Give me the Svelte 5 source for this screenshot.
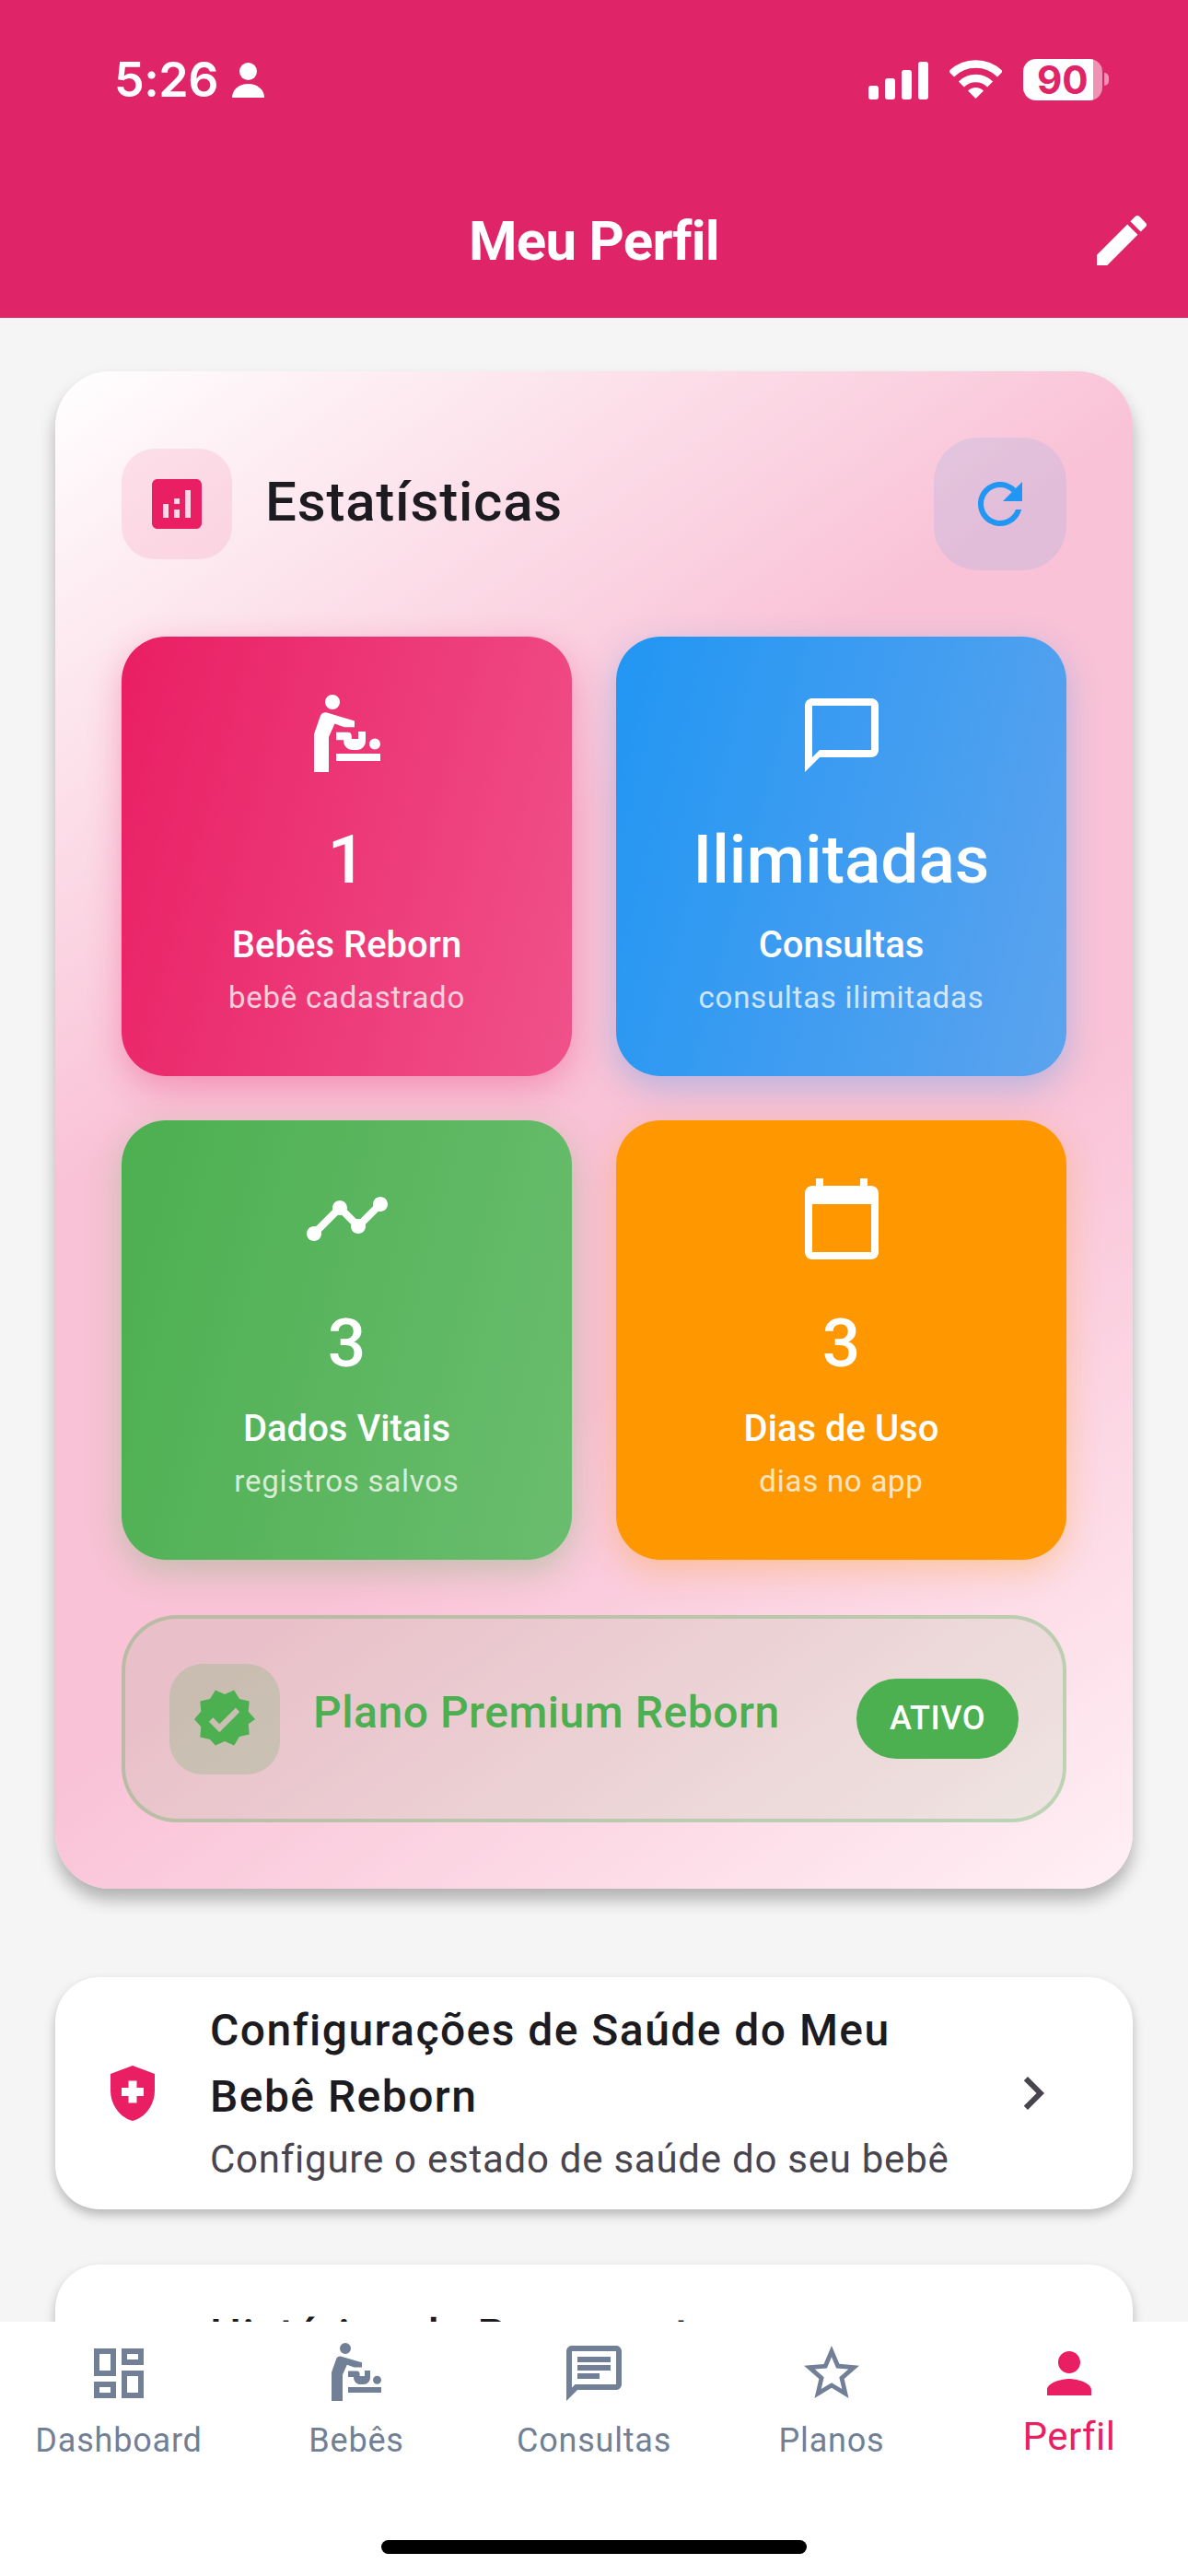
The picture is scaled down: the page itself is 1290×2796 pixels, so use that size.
<script>
  const icons = {
    baby: "M8 1a2 2 0 1 1 0 4a2 2 0 0 1 0-4zM3 22V11.7L4.7 6.8C5 6 5.8 5.7 6.5 5.9L14 8.1V9.8H11.2L8.6 8.9L7 12.5V22zM9 17h12v2H9zM19.5 12.9a1.5 1.5 0 1 1 0 3a1.5 1.5 0 0 1 0-3zM9 11.2H12.2C12.9 11.2 13.2 11.7 13.2 12.3V13H15V11H17V13.5C17 14.9 16 16 14.6 16H13.6C12 16 11 14.9 11 13.3H9z",
    bubble: "M20 2H4c-1.1 0-2 .9-2 2v18l4-4h14c1.1 0 2-.9 2-2V4c0-1.1-.9-2-2-2zm0 14H6l-2 2V4h16v12z",
    timeline: "M23 8c0 1.1-.9 2-2 2-.18 0-.35-.02-.51-.07l-3.56 3.55c.05.16.07.34.07.52 0 1.1-.9 2-2 2s-2-.9-2-2c0-.18.02-.36.07-.52l-2.55-2.55c-.16.05-.34.07-.52.07s-.36-.02-.52-.07l-4.55 4.56c.05.16.07.33.07.51 0 1.1-.9 2-2 2s-2-.9-2-2 .9-2 2-2c.18 0 .35.02.51.07l4.56-4.55C8.02 9.36 8 9.18 8 9c0-1.1.9-2 2-2s2 .9 2 2c0 .18-.02.36-.07.52l2.55 2.55c.16-.05.34-.07.52-.07s.36.02.52.07l3.55-3.56C19.02 8.35 19 8.18 19 8c0-1.1.9-2 2-2s2 .9 2 2z",
    calendar: "M20 3h-1V1h-2v2H7V1H5v2H4c-1.1 0-2 .9-2 2v16c0 1.1.9 2 2 2h16c1.1 0 2-.9 2-2V5c0-1.1-.9-2-2-2zm0 18H4V8h16v13z",
    dashboard: "M19 5v2h-4V5h4M9 5v6H5V5h4m10 8v6h-4v-6h4M9 17v2H5v-2h4M21 3h-8v6h8V3zM11 3H3v10h8V3zm10 8h-8v10h8V11zm-10 4H3v6h8v-6z",
    chat: "M20 2H4c-1.1 0-1.99.9-1.99 2L2 22l4-4h14c1.1 0 2-.9 2-2V4c0-1.1-.9-2-2-2zm0 14H5.17L4 17.17V4h16v12zM6 12h8v2H6zm0-3h12v2H6zm0-3h12v2H6z",
    star: "M22 9.24l-7.19-.62L12 2 9.19 8.63 2 9.24l5.46 4.73L5.82 21 12 17.27 18.18 21l-1.63-7.03L22 9.24zM12 15.4l-3.76 2.27 1-4.28-3.32-2.88 4.38-.38L12 6.1l1.71 4.04 4.38.38-3.32 2.88 1 4.28L12 15.4z",
    person: "M12 12c2.21 0 4-1.79 4-4s-1.79-4-4-4-4 1.79-4 4 1.79 4 4 4zm0 2c-2.67 0-8 1.34-8 4v2h16v-2c0-2.66-5.33-4-8-4z",
    edit: "M3 17.25V21h3.75L17.81 9.94l-3.75-3.75L3 17.25zM20.71 7.04c.39-.39.39-1.02 0-1.41l-2.34-2.34c-.39-.39-1.02-.39-1.41 0l-1.83 1.83 3.75 3.75 1.83-1.83z",
    analytics: "M19 3H5c-1.1 0-2 .9-2 2v14c0 1.1.9 2 2 2h14c1.1 0 2-.9 2-2V5c0-1.1-.9-2-2-2zM9 17H7v-5h2v5zm4 0h-2v-3h2v3zm0-5h-2v-2h2v2zm4 5h-2V7h2v10z",
    refresh: "M17.65 6.35C16.2 4.9 14.21 4 12 4c-4.42 0-7.99 3.58-7.99 8s3.57 8 7.99 8c3.73 0 6.84-2.55 7.73-6h-2.08c-.82 2.33-3.04 4-5.65 4-3.31 0-6-2.69-6-6s2.69-6 6-6c1.66 0 3.14.69 4.22 1.78L13 11h7V4l-2.35 2.35z",
    verified: "M23 12l-2.44-2.79.34-3.69-3.61-.82-1.89-3.2L12 2.96 8.6 1.5 6.71 4.69 3.1 5.5l.34 3.7L1 12l2.44 2.79-.34 3.7 3.61.82L8.6 21.5l3.4-1.47 3.4 1.46 1.89-3.19 3.61-.82-.34-3.69L23 12zm-12.91 4.72l-3.8-3.81 1.48-1.48 2.32 2.33 5.85-5.87 1.48 1.48-7.33 7.35z",
    health: "M10.5 13H8v-3h2.5V7.5h3V10H16v3h-2.5v2.5h-3V13zM12 2L4 5v6.09c0 5.05 3.41 9.76 8 10.91 4.59-1.15 8-5.86 8-10.91V5l-8-3z",
    chevron: "M10 6L8.59 7.41 13.17 12l-4.58 4.59L10 18l6-6z"
  };

  const stats = [
    { color: "pink", icon: "baby", value: "1", label: "Bebês Reborn", sub: "bebê cadastrado" },
    { color: "blue", icon: "bubble", value: "Ilimitadas", label: "Consultas", sub: "consultas ilimitadas" },
    { color: "green", icon: "timeline", value: "3", label: "Dados Vitais", sub: "registros salvos" },
    { color: "orange", icon: "calendar", value: "3", label: "Dias de Uso", sub: "dias no app" }
  ];

  const tabs = [
    { icon: "dashboard", label: "Dashboard" },
    { icon: "baby", label: "Bebês" },
    { icon: "chat", label: "Consultas" },
    { icon: "star", label: "Planos" },
    { icon: "person", label: "Perfil", active: true }
  ];
</script>

<div class="screen">
  <header class="topbar">
    <div class="status">
      <div class="status-left">
        <span class="time">5:26</span>
        <svg class="status-person" viewBox="0 0 35 38"><circle cx="17.5" cy="9.5" r="9.5" /><path d="M0 38c0-9 8-15 17.5-15S35 29 35 38z" /></svg>
      </div>
      <div class="status-right">
        <svg class="signal" viewBox="0 0 65 41">
          <rect x="0" y="26" width="11" height="15" rx="3" />
          <rect x="18" y="18" width="11" height="23" rx="3" />
          <rect x="36" y="9" width="11" height="32" rx="3" />
          <rect x="54" y="0" width="11" height="41" rx="3" />
        </svg>
        <svg class="wifi" viewBox="0 0 57 42">
          <path class="wifi-arc" d="M2 15.5A37.5 37.5 0 0 1 55 15.5" />
          <path class="wifi-arc" d="M12.9 26.4A22 22 0 0 1 44.1 26.4" />
          <path d="M28.5 42L20 33.5A12 12 0 0 1 37 33.5z" />
        </svg>
        <div class="battery"><span>90</span></div>
        <div class="battery-cap"></div>
      </div>
    </div>
    <div class="title-row">
      <h1>Meu Perfil</h1>
      <svg class="edit" viewBox="0 0 24 24"><path d={icons.edit} /></svg>
    </div>
  </header>

  <main class="content">
    <section class="stats-card">
      <div class="stats-head">
        <div class="head-icon"><svg viewBox="0 0 24 24"><path d={icons.analytics} /></svg></div>
        <h2>Estatísticas</h2>
        <button class="refresh" aria-label="Atualizar"><svg viewBox="0 0 24 24"><path d={icons.refresh} /></svg></button>
      </div>

      <div class="stats-grid">
        {#each stats as s}
          <div class="stat {s.color}">
            <svg viewBox="0 0 24 24"><path d={icons[s.icon]} /></svg>
            <div class="stat-value">{s.value}</div>
            <div class="stat-label">{s.label}</div>
            <div class="stat-sub">{s.sub}</div>
          </div>
        {/each}
      </div>

      <div class="plan">
        <div class="plan-icon"><svg viewBox="0 0 24 24"><path d={icons.verified} /></svg></div>
        <div class="plan-name">Plano Premium Reborn</div>
        <div class="plan-badge">ATIVO</div>
      </div>
    </section>

    <div class="menu-item">
      <svg class="menu-icon" viewBox="0 0 24 24"><path d={icons.health} /></svg>
      <div class="menu-text">
        <div class="menu-title">Configurações de Saúde do Meu Bebê Reborn</div>
        <div class="menu-sub">Configure o estado de saúde do seu bebê</div>
      </div>
      <svg class="menu-chevron" viewBox="0 0 24 24"><path d={icons.chevron} /></svg>
    </div>

    <div class="menu-item next">
      <svg class="menu-icon" viewBox="0 0 24 24"><path d={icons.health} /></svg>
      <div class="menu-text">
        <div class="menu-title">Histórico de Pagamentos</div>
      </div>
    </div>
  </main>

  <nav class="tabbar">
    <div class="tabs">
      {#each tabs as t}
        <div class="tab" class:active={t.active}>
          <svg viewBox="0 0 24 24"><path d={icons[t.icon]} /></svg>
          <span>{t.label}</span>
        </div>
      {/each}
    </div>
    <div class="home-indicator"></div>
  </nav>
</div>

<style>
  :global(body) {
    margin: 0;
    background: #f5f5f5;
  }

  .screen {
    width: 1290px;
    height: 2796px;
    display: flex;
    flex-direction: column;
    overflow: hidden;
    font-family: Roboto, "Liberation Sans", sans-serif;
    background: #f5f5f5;
  }

  /* top bar */
  .topbar {
    height: 345px;
    flex-shrink: 0;
    background: #df2467;
    color: #fff;
    box-sizing: border-box;
    padding-top: 60px;
  }

  .status {
    display: flex;
    justify-content: space-between;
    align-items: center;
    height: 52px;
    padding: 0 86px 0 124px;
  }

  .status-left,
  .status-right {
    display: flex;
    align-items: center;
  }

  .time {
    font-family: Inter, sans-serif;
    font-size: 52px;
    font-weight: 600;
    letter-spacing: -0.5px;
  }

  .status-person {
    width: 35px;
    height: 38px;
    margin-left: 15px;
    margin-top: 2px;
    fill: #fff;
  }

  .signal {
    width: 65px;
    height: 41px;
    fill: #fff;
    margin-top: 2px;
  }

  .wifi {
    width: 57px;
    height: 42px;
    margin-left: 23px;
    fill: #fff;
  }

  .wifi-arc {
    fill: none;
    stroke: #fff;
    stroke-width: 8.5;
  }

  .battery {
    width: 86px;
    height: 45px;
    margin-left: 23px;
    border-radius: 14px;
    background: linear-gradient(90deg, #fff 88%, rgba(255, 255, 255, 0.5) 88%);
    display: flex;
    align-items: center;
    padding-left: 15px;
    box-sizing: border-box;
    color: #df2467;
    font-family: Inter, sans-serif;
    font-size: 42px;
    font-weight: 700;
  }

  .battery-cap {
    width: 5px;
    height: 14px;
    margin-left: 2px;
    border-radius: 0 6px 6px 0;
    background: rgba(255, 255, 255, 0.5);
  }

  .title-row {
    display: flex;
    align-items: center;
    justify-content: center;
    position: relative;
    margin-top: 113px;
    height: 72px;
  }

  h1 {
    margin: 0;
    font-size: 60px;
    font-weight: 700;
    letter-spacing: -0.8px;
  }

  .edit {
    position: absolute;
    right: 36px;
    top: 0;
    width: 72px;
    height: 72px;
    fill: #fff;
  }

  /* main scroll area */
  .content {
    flex: 1;
    min-height: 0;
    overflow: hidden;
    padding: 58px 60px 0;
    box-sizing: border-box;
  }

  .stats-card {
    padding: 72px;
    border-radius: 60px;
    background: linear-gradient(144.6deg, #fff 0%, #f9c2d6 36%, #f9c2d6 62%, #fff0f5 100%);
    box-shadow: 0 12px 18px rgba(0, 0, 0, 0.28);
  }

  .stats-head {
    display: flex;
    align-items: center;
    height: 144px;
    margin-bottom: 72px;
  }

  .head-icon {
    width: 120px;
    height: 120px;
    border-radius: 36px;
    background: rgba(233, 30, 99, 0.1);
    display: flex;
    align-items: center;
    justify-content: center;
  }

  .head-icon svg {
    width: 72px;
    height: 72px;
    fill: #e91e63;
  }

  h2 {
    margin: 0 0 5px 36px;
    flex: 1;
    font-size: 60px;
    font-weight: 500;
    letter-spacing: 0.8px;
    color: #1c1b1f;
  }

  .refresh {
    width: 144px;
    height: 144px;
    padding: 0;
    border: none;
    border-radius: 48px;
    background: rgba(33, 150, 243, 0.1);
    display: flex;
    align-items: center;
    justify-content: center;
  }

  .refresh svg {
    width: 72px;
    height: 72px;
    fill: #2196f3;
  }

  .stats-grid {
    display: grid;
    grid-template-columns: 1fr 1fr;
    gap: 48px;
    margin-bottom: 60px;
  }

  .stat {
    height: 477px;
    box-sizing: border-box;
    padding-top: 59px;
    border-radius: 48px;
    color: #fff;
    text-align: center;
  }

  .stat svg {
    display: block;
    width: 96px;
    height: 96px;
    margin: 0 auto;
    fill: #fff;
  }

  .stat.pink {
    background: linear-gradient(105deg, #e91e63, #f0528a);
    box-shadow: 0 12px 36px rgba(233, 30, 99, 0.3);
  }

  .stat.blue {
    background: linear-gradient(105deg, #2196f3, #5ca3ee);
    box-shadow: 0 12px 36px rgba(33, 150, 243, 0.3);
  }

  .stat.green {
    background: linear-gradient(105deg, #4caf50, #6abd6e);
    box-shadow: 0 12px 36px rgba(76, 175, 80, 0.3);
  }

  .stat.orange {
    background: #ff9800;
    box-shadow: 0 12px 36px rgba(255, 152, 0, 0.3);
  }

  .stat-value {
    margin-top: 45px;
    font-size: 73px;
    line-height: 84px;
    font-weight: 500;
  }

  .stat-label {
    margin-top: 21px;
    font-size: 40px;
    line-height: 60px;
    font-weight: 500;
  }

  .stat-sub {
    margin-top: 3px;
    font-size: 33px;
    line-height: 48px;
    letter-spacing: 0.75px;
    opacity: 0.75;
  }

  .plan {
    display: flex;
    align-items: center;
    height: 225px;
    box-sizing: border-box;
    padding: 0 48px;
    border: 4.5px solid rgba(76, 175, 80, 0.3);
    border-radius: 60px;
    background: rgba(76, 175, 80, 0.09);
  }

  .plan-icon {
    width: 120px;
    height: 120px;
    border-radius: 36px;
    background: rgba(76, 175, 80, 0.2);
    display: flex;
    align-items: center;
    justify-content: center;
  }

  .plan-icon svg {
    width: 72px;
    height: 72px;
    fill: #4caf50;
  }

  .plan-name {
    flex: 1;
    margin: 0 0 14px 36px;
    font-size: 48px;
    font-weight: 500;
    letter-spacing: 0.55px;
    color: #4caf50;
  }

  .plan-badge {
    width: 176px;
    height: 87px;
    border-radius: 44px;
    background: #4caf50;
    color: #fff;
    font-size: 36px;
    font-weight: 500;
    line-height: 87px;
    text-align: center;
    letter-spacing: 0.5px;
  }

  /* menu rows */
  .menu-item {
    display: flex;
    align-items: center;
    margin-top: 96px;
    padding: 24px 72px 24px 48px;
    border-radius: 48px;
    background: #fff;
    box-shadow: 0 6px 12px rgba(0, 0, 0, 0.25);
  }

  .menu-item.next {
    margin-top: 60px;
    padding-top: 43px;
    padding-bottom: 43px;
  }

  .menu-item.next .menu-text {
    min-height: 132px;
  }

  .menu-icon {
    width: 72px;
    height: 72px;
    flex-shrink: 0;
    fill: #e91e63;
  }

  .menu-text {
    flex: 1;
    margin: 0 48px;
  }

  .menu-title {
    font-size: 48px;
    line-height: 72px;
    font-weight: 500;
    letter-spacing: 1.45px;
    color: #1c1b1f;
    transform: translateY(-2px);
  }

  .menu-sub {
    font-size: 42px;
    line-height: 60px;
    letter-spacing: 0.75px;
    color: #49454f;
  }

  .menu-chevron {
    width: 72px;
    height: 72px;
    flex-shrink: 0;
    fill: #49454f;
  }

  /* bottom tabs */
  .tabbar {
    height: 276px;
    flex-shrink: 0;
    background: #fff;
    display: flex;
    flex-direction: column;
  }

  .tabs {
    display: grid;
    grid-template-columns: repeat(5, 1fr);
    padding-top: 20px;
  }

  .tab {
    display: flex;
    flex-direction: column;
    align-items: center;
    color: #718096;
    font-size: 36px;
    letter-spacing: 0.8px;
    line-height: 54px;
  }

  .tab svg {
    width: 72px;
    height: 72px;
    fill: #718096;
    margin-bottom: 10px;
  }

  .tab.active {
    color: #e91e63;
    font-size: 42px;
    letter-spacing: 0.5px;
  }

  .tab.active svg {
    fill: #e91e63;
    margin-bottom: 6px;
  }

  .home-indicator {
    width: 462px;
    height: 15px;
    margin: auto auto 24px;
    border-radius: 8px;
    background: #000;
  }
</style>
